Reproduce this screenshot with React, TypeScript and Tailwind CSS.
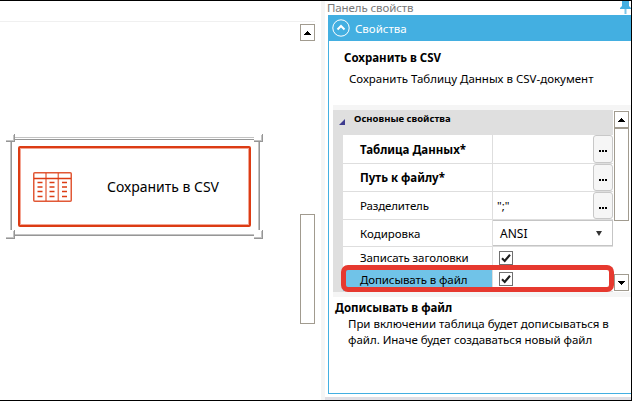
import type { ReactNode } from "react";

function Arrow({ down = false }: { down?: boolean }) {
  return (
    <svg width="7" height="4" viewBox="0 0 7 4" shapeRendering="crispEdges" className={down ? "rotate-180" : ""}>
      <path d="M3 0h1v1h1v1h1v1h1v1H0V3h1V2h1V1h1z" fill="#000" />
    </svg>
  );
}

function ScrollButton({ down = false }: { down?: boolean }) {
  return (
    <div className="flex h-[17px] w-[15px] shrink-0 items-center justify-center border border-[#a19b8f] bg-white">
      <Arrow down={down} />
    </div>
  );
}

function TableIcon() {
  return (
    <svg width="39" height="30" viewBox="0 0 39 30" fill="none" stroke="#dc3c14" className="shrink-0">
      <rect x="0.75" y="0.75" width="37.5" height="28.5" rx="1" strokeWidth="1.5" strokeOpacity=".85" />
      <path d="M1 6.5h37" strokeWidth="1.4" />
      <path d="M13 1v28M25.3 1v28" strokeWidth="1.5" strokeOpacity=".7" />
      <path
        d="M4.5 10.5h5M4.5 15h5M4.5 19.5h5M4.5 24.5h5M16.5 10.5h5M16.5 15h5M16.5 19.5h5M16.5 24.5h5M29 10.5h5M29 15h5M29 19.5h5M29 24.5h5"
        strokeWidth="1.6"
      />
    </svg>
  );
}

function SelectionFrame() {
  return (
    <svg
      width="257"
      height="105"
      viewBox="6 134 257 105"
      shapeRendering="crispEdges"
      fill="none"
      className="pointer-events-none absolute inset-0"
    >
      <path d="M14 137.5h240M14 234.5h240M10.5 142v88M258.5 142v88M6 140.5h8M13.5 135v6M254 140.5h8M261.5 135v6M6 237.5h8M13.5 231v7M254 237.5h8M261.5 231v7" stroke="#c3c3c3" />
      <path d="M14 139.5h240M14 235.5h240M11.5 142v88M259.5 142v88M6 141.5h9M14.5 134v8M254 141.5h9M262.5 134v8M6 238.5h9M14.5 230v9M254 238.5h9M262.5 230v9" stroke="#969696" />
    </svg>
  );
}

function Pin() {
  return (
    <svg width="11" height="13" viewBox="0 0 11 13" fill="#43afe1" className="shrink-0">
      <path d="M2 0h7v5l2 2v1H0V7l2-2z" />
      <path d="M4.5 8h2v5h-2z" fillOpacity=".7" />
    </svg>
  );
}

function Checkbox() {
  return (
    <div className="ml-[6px] flex size-[14px] items-center justify-center border border-[#707070] bg-white">
      <svg width="12" height="12" viewBox="0 0 12 12" fill="none" stroke="#1e1e1e" strokeWidth="2.1">
        <path d="M2 6.2l2.7 2.7L10 2.8" />
      </svg>
    </div>
  );
}

function MoreButton() {
  return (
    <button className="ml-auto flex h-full w-5 items-center justify-center rounded-[3px] border border-[#c8c8c8] bg-[#f6f6f6]">
      <span className="flex gap-px pt-1">
        <i className="size-[2px] bg-black" />
        <i className="size-[2px] bg-black" />
        <i className="size-[2px] bg-black" />
      </span>
    </button>
  );
}

function Row({ label, height, labelClass = "", valueClass = "", children }: { label: string; height: string; labelClass?: string; valueClass?: string; children?: ReactNode }) {
  return (
    <div className={`flex shrink-0 ${height}`}>
      <div className={`flex w-[149px] items-center whitespace-nowrap border-b border-[#dedede] pl-[17px] ${labelClass}`}>{label}</div>
      <div className={`flex flex-1 items-center border-b border-l border-[#dedede] ${valueClass}`}>{children}</div>
    </div>
  );
}

export default function App() {
  return (
    <div className="flex h-[401px] w-[632px] overflow-hidden border-y border-r border-black bg-white font-['Noto_Sans','Open_Sans',sans-serif] text-[11.5px] leading-4 text-black">
      <main className="flex w-[321px] shrink-0">
        <section className="w-[300px]">
          <div className="h-[21px] border-b border-[#f0f0f0]" />
          <div className="relative ml-[6px] mt-[112px] h-[105px] w-[257px] px-3 py-3">
            <div className="h-[81px] w-[233px] rounded-[2px] border-2 border-[#dc3c14]">
              <div className="flex h-full items-center border border-[#f3a594] pl-3">
                <TableIcon />
                <span className="ml-[35px] whitespace-nowrap text-[14px]">Сохранить в CSV</span>
              </div>
            </div>
            <SelectionFrame />
          </div>
        </section>
        <div className="flex w-[15px] flex-col">
          <div className="mb-[2px] h-[21px] border-b border-[#f0f0f0]" />
          <ScrollButton />
          <div className="mt-[173px] h-[110px] border border-[#a19b8f]" />
        </div>
      </main>
      <div className="w-1 shrink-0 bg-[#f5f5f5]" />
      <aside className="flex w-[306px] flex-col">
        <div className="flex h-[14px] shrink-0 items-start justify-between pl-[2px] text-[#777]">
          <span className="leading-[13px] tracking-[-0.1px]">Панель свойств</span>
          <Pin />
        </div>
        <div className="ml-[3px] flex h-[379px] flex-col border-b border-l border-[#43afe1]">
          <header className="-ml-px flex h-[26px] shrink-0 items-center bg-[#43afe1] pl-1 text-white">
            <svg width="18" height="18" viewBox="0 0 18 18" fill="none" stroke="white">
              <circle cx="9" cy="9" r="8.2" strokeWidth="1" />
              <path d="M5.5 10.5L9 7l3.5 3.5" strokeWidth="2" />
            </svg>
            <span className="ml-[5px] pt-[2px]">Свойства</span>
          </header>
          <div className="h-16 shrink-0 whitespace-nowrap pt-[9px]">
            <h1 className="pl-[15px] font-bold">Сохранить в CSV</h1>
            <p className="pl-5 pt-[5px]">Сохранить Таблицу Данных в CSV-документ</p>
          </div>
          <div className="ml-1 h-[192px] shrink-0 border-b-[5px] border-t-[5px] border-[#f5f5f5]">
            <div className="flex h-[182px]">
              <div className="relative w-[280px] bg-[#dfdfdf]">
                <div className="flex h-[25px] items-center pl-[6px]">
                  <svg width="6" height="6" viewBox="0 0 6 6" className="-mt-[2px]">
                    <path d="M6 0v6H0z" fill="#3d3b8e" />
                  </svg>
                  <span className="ml-[9px] mt-[-7px] whitespace-nowrap text-[9.5px] font-bold">Основные свойства</span>
                </div>
                <div className="ml-[10px] flex h-[157px] flex-col overflow-hidden bg-white">
                  <Row label="Таблица Данных*" height="h-[29px]" labelClass="font-bold pt-px"><MoreButton /></Row>
                  <Row label="Путь к файлу*" height="h-[28px]" labelClass="font-bold"><MoreButton /></Row>
                  <Row label="Разделитель" height="h-[28px]" labelClass="tracking-[-0.15px]"><span className="pl-1">";"</span><MoreButton /></Row>
                  <Row label="Кодировка" height="h-[27px]" labelClass="pt-[2px]">
                    <div className="flex h-full flex-1 items-center justify-between border border-l-0 border-[#c5c5c5] pl-[7px] pr-[10px]">
                      <span className="pt-[2px] text-[12px]">ANSI</span>
                      <svg width="6" height="5" viewBox="0 0 6 5"><path d="M0 0h6L3 5z" fill="#333" /></svg>
                    </div>
                  </Row>
                  <Row label="Записать заголовки" height="h-[21px]" labelClass="pt-[2px] tracking-[-0.12px]" valueClass="pt-[2px]"><Checkbox /></Row>
                  <Row label="Дописывать в файл" height="h-[24px]" labelClass="bg-[#70c3e8] tracking-[-0.12px]" valueClass="pb-px"><Checkbox /></Row>
                </div>
                <div className="absolute bottom-0 left-2 h-[27px] w-[273px] rounded-[7px] border-[5px] border-[#e6392f]" />
              </div>
              <div className="ml-px flex w-[15px] flex-col pt-px">
                <ScrollButton />
                <div className="h-[93px] border border-[#a19b8f]" />
                <div className="mt-auto pb-px"><ScrollButton down /></div>
              </div>
            </div>
          </div>
          <div className="whitespace-nowrap pl-[6px] pt-[3px]">
            <h2 className="font-bold">Дописывать в файл</h2>
            <p className="pl-[13px] tracking-[-0.03px]">При включении таблица будет дописываться в<br />файл. Иначе будет создаваться новый файл</p>
          </div>
        </div>
        <div className="mt-auto h-[3px] bg-[#dfdee4]" />
      </aside>
    </div>
  );
}
